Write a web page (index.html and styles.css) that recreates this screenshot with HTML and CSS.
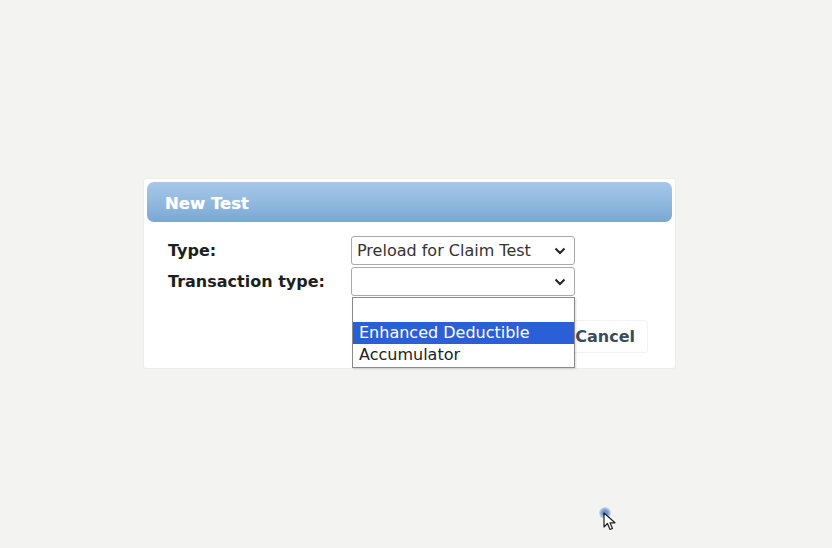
FILE: index.html
```html
<!DOCTYPE html>
<html>
<head>
<meta charset="utf-8">
<link rel="stylesheet" href="styles.css">
</head>
<body>
<div class="page">
  <div class="dialog">
    <div class="header">New Test</div>
    <div class="form">
      <div class="row">
        <label class="label">Type:</label>
        <div class="field">
          <div class="select"><span class="value">Preload for Claim Test</span><svg class="chev" viewBox="0 0 12 8" width="12" height="8"><path d="M1.5 1.5 L6 6 L10.5 1.5" fill="none" stroke="#222" stroke-width="2"/></svg></div>
        </div>
      </div>
      <div class="row">
        <label class="label">Transaction type:</label>
        <div class="field">
          <div class="select"><span class="value"></span><svg class="chev" viewBox="0 0 12 8" width="12" height="8"><path d="M1.5 1.5 L6 6 L10.5 1.5" fill="none" stroke="#222" stroke-width="2"/></svg></div>
          <div class="listbox">
            <div class="opt"></div>
            <div class="opt selected">Enhanced Deductible</div>
            <div class="opt">Accumulator</div>
          </div>
        </div>
      </div>
      <div class="actions">
        <button class="btn">Cancel</button>
      </div>
    </div>
  </div>
  <div class="cursor">
    <div class="halo"></div>
    <svg class="arrow" viewBox="0 0 14 20" width="14" height="20"><path d="M1 1 L1 15 L4.5 11.5 L7 17.5 L9.5 16.5 L7 10.8 L12 10.8 Z" fill="#fff" stroke="#222" stroke-width="1.2" stroke-linejoin="round"/></svg>
  </div>
</div>
</body>
</html>
```
FILE: styles.css
```css
html, body {
  margin: 0;
  padding: 0;
}
body {
  background: #f3f4f2;
  font-family: "DejaVu Sans", Verdana, sans-serif;
  width: 832px;
  height: 548px;
  overflow: hidden;
}
.page {
  position: relative;
  width: 832px;
  height: 548px;
  padding-top: 178px;
  box-sizing: border-box;
}
.dialog {
  margin-left: 143px;
  width: 533px;
  height: 191px;
  background: #fff;
  box-sizing: border-box;
  padding: 3px;
  border: 1px solid #eceeec;
  border-radius: 3px;
}
.header {
  height: 40px;
  box-sizing: border-box;
  border-radius: 7px;
  background: linear-gradient(#a7c8e7, #8db6dd 60%, #79a6d3);
  color: #fff;
  font-weight: bold;
  font-size: 16.5px;
  line-height: 36px;
  padding: 4px 0 0 18px;
  text-shadow: 0 0 1px rgba(255,255,255,0.6);
}
.form {
  padding: 13px 0 0 21px;
}
.row {
  display: flex;
  align-items: center;
  height: 31px;
}
.label {
  width: 183px;
  font-weight: bold;
  font-size: 16px;
  color: #1e1e1e;
}
.field {
  position: relative;
}
.select {
  width: 224px;
  height: 29px;
  box-sizing: border-box;
  border: 1px solid #a9a9a9;
  border-radius: 3px;
  background: #fff;
  display: flex;
  align-items: center;
  padding: 0 8px 0 5px;
}
.value {
  flex: 1;
  font-family: "DejaVu Sans", Verdana, sans-serif;
  font-size: 16px;
  color: #333;
}
.chev {
  display: block;
}
.listbox {
  position: absolute;
  left: 1px;
  top: 30px;
  width: 223px;
  box-sizing: border-box;
  border: 1px solid #8a8a8a;
  background: #fff;
  z-index: 2;
  padding-bottom: 1px;
  box-shadow: 1px 1px 2px rgba(0,0,0,0.15);
}
.opt {
  height: 22px;
  line-height: 22px;
  padding-left: 6px;
  font-family: "DejaVu Sans", Verdana, sans-serif;
  font-size: 16px;
  color: #222;
}
.opt:first-child {
  height: 24px;
}
.opt.selected {
  background: #2a5fd8;
  color: #fff;
}
.actions {
  display: flex;
  justify-content: flex-end;
  padding: 23px 24px 0 0;
}
.btn {
  font-family: "DejaVu Sans", Verdana, sans-serif;
  font-weight: bold;
  font-size: 16px;
  color: #3b4b5c;
  background: #fff;
  border: 1px solid #f0f2f4;
  border-radius: 3px;
  height: 33px;
  padding: 0 12px 0 60px;
}
.cursor {
  position: absolute;
  left: 597px;
  top: 505px;
  width: 24px;
  height: 30px;
}
.halo {
  position: absolute;
  left: 2px;
  top: 2px;
  width: 12px;
  height: 12px;
  border-radius: 50%;
  background: radial-gradient(circle, rgba(90,130,200,0.85) 30%, rgba(120,160,220,0.3) 70%, rgba(120,160,220,0) 100%);
}
.arrow {
  position: absolute;
  left: 6px;
  top: 7px;
}
```
